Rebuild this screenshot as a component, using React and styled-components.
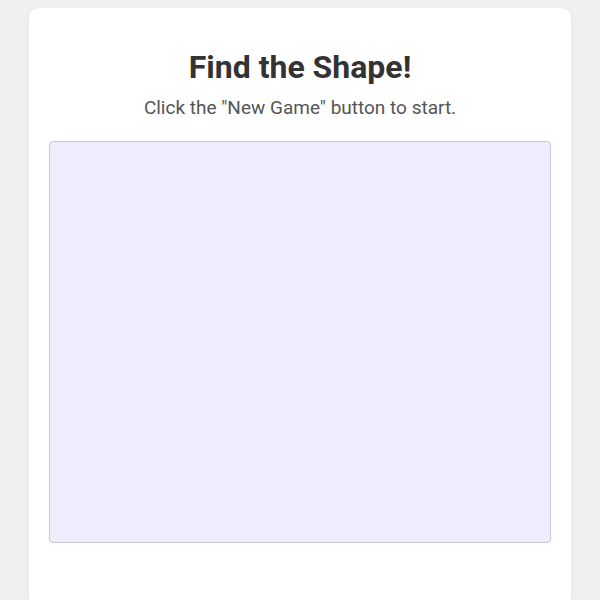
import React from "react";
import styled, { createGlobalStyle } from "styled-components";

const GlobalStyle = createGlobalStyle`
  html, body {
    margin: 0;
    padding: 0;
    background-color: #f0f0f0;
    font-family: Roboto, "Liberation Sans", Arial, sans-serif;
  }
  body {
    padding-top: 8px;
  }
`;

const Card = styled.div`
  box-sizing: border-box;
  width: 542px;
  min-height: 600px;
  margin: 0 auto;
  padding: 30px 20px 20px;
  background-color: #ffffff;
  border-radius: 10px;
  box-shadow: 0 2px 6px rgba(0, 0, 0, 0.06);
  display: flex;
  flex-direction: column;
  align-items: center;
`;

const Title = styled.h1`
  margin: 10px 0 0;
  font-size: 32px;
  font-weight: 700;
  color: #333333;
  line-height: 1.2;
`;

const Message = styled.p`
  margin: 10px 0 20px;
  font-size: 19px;
  color: #555555;
  line-height: 1.3;
`;

const GameArea = styled.div`
  box-sizing: border-box;
  width: 502px;
  height: 402px;
  background-color: #eeeeff;
  border: 1px solid #c8c8d4;
  border-radius: 4px;
`;

const App = () => {
  return (
    <>
      <GlobalStyle />
      <Card>
        <Title>Find the Shape!</Title>
        <Message>Click the "New Game" button to start.</Message>
        <GameArea />
      </Card>
    </>
  );
};

export default App;
